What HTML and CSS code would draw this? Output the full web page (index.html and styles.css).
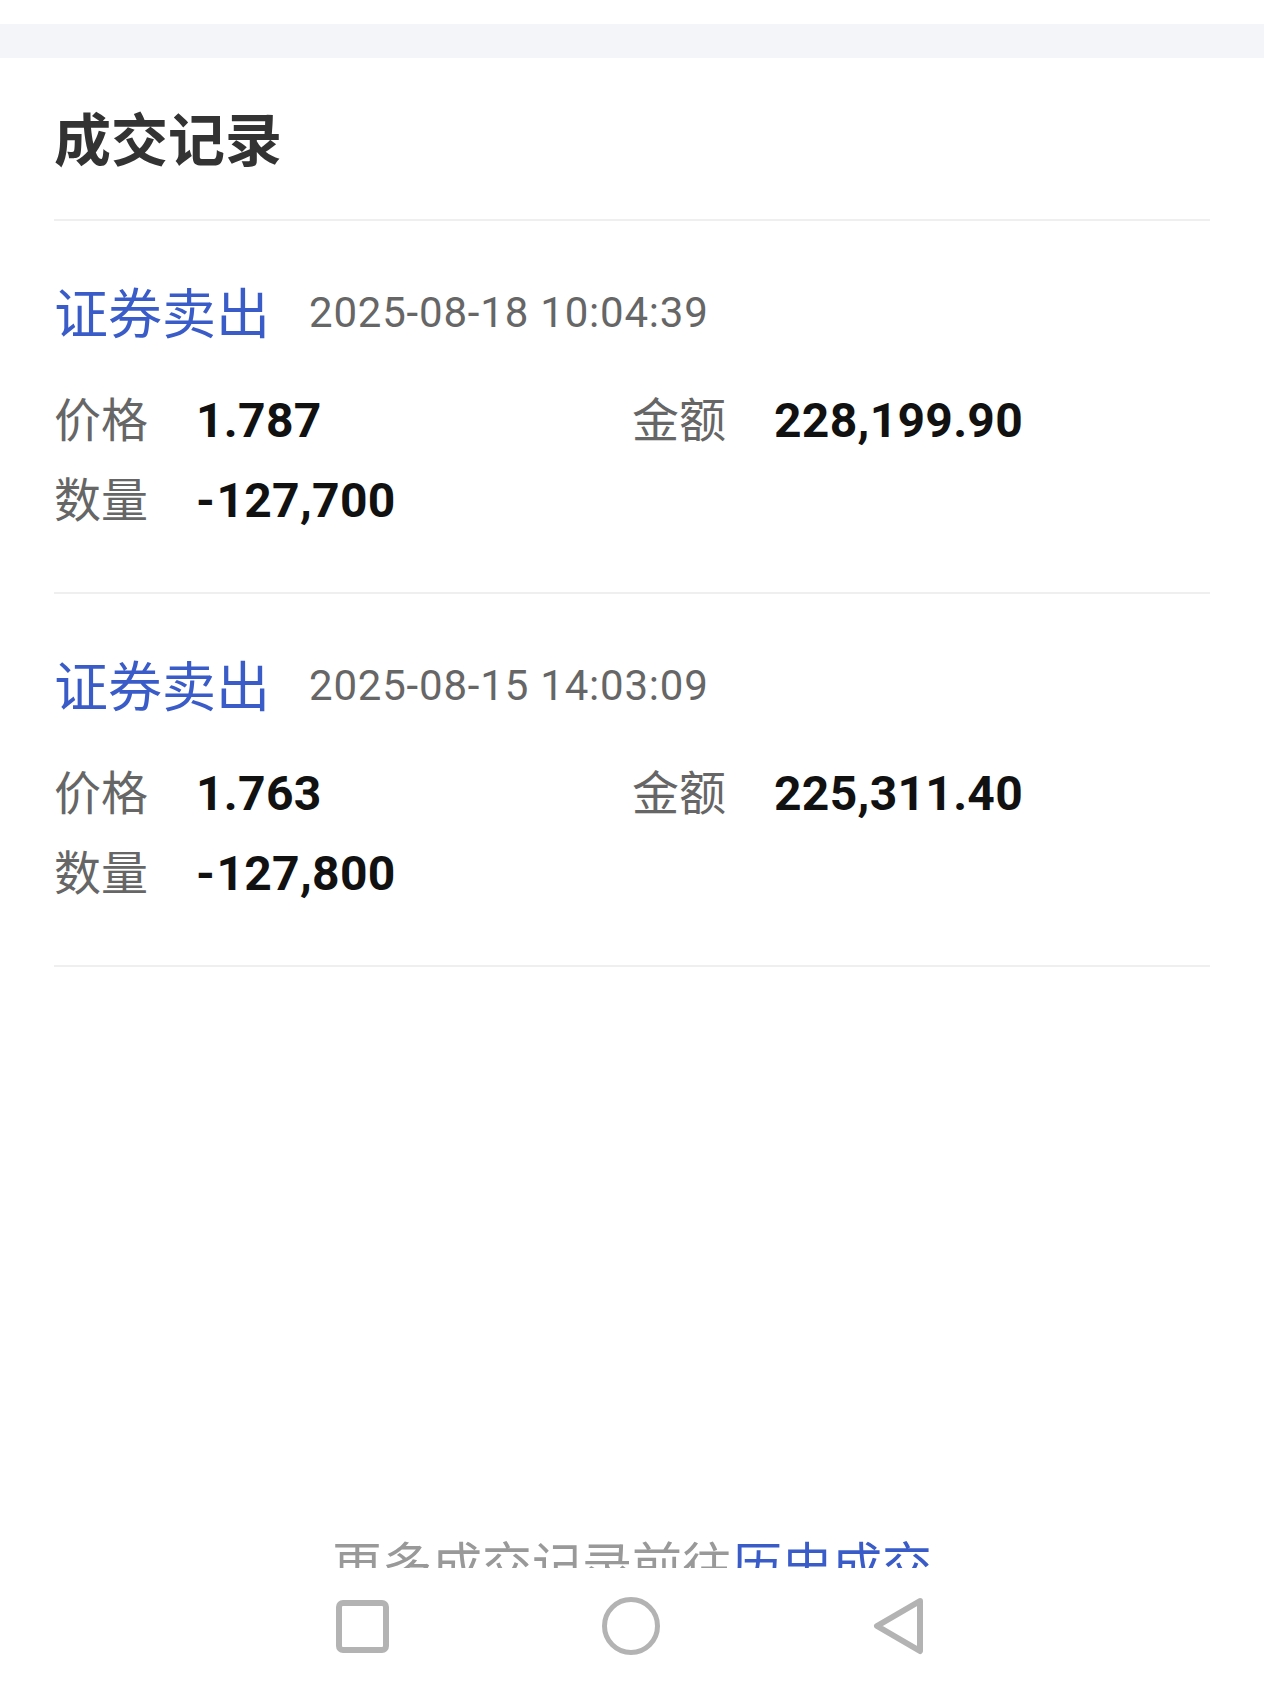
FILE: index.html
```html
<!DOCTYPE html>
<html lang="zh-CN">
<head>
<meta charset="utf-8">
<title>成交记录</title>
<link rel="stylesheet" href="styles.css">
</head>
<body>
<div class="screen">
  <div class="statusbar"></div>
  <div class="band"></div>
  <main class="content">
    <h1 class="title">成交记录</h1>
    <div class="records">
      <section class="record">
        <div class="record-head">
          <span class="type">证券卖出</span>
          <span class="time">2025-08-18 10:04:39</span>
        </div>
        <div class="fields">
          <div class="field"><span class="label">价格</span><span class="value">1.787</span></div>
          <div class="field"><span class="label">金额</span><span class="value">228,199.90</span></div>
          <div class="field"><span class="label">数量</span><span class="value"><span class="sign">-</span>127,700</span></div>
        </div>
      </section>
      <section class="record">
        <div class="record-head">
          <span class="type">证券卖出</span>
          <span class="time">2025-08-15 14:03:09</span>
        </div>
        <div class="fields">
          <div class="field"><span class="label">价格</span><span class="value">1.763</span></div>
          <div class="field"><span class="label">金额</span><span class="value">225,311.40</span></div>
          <div class="field"><span class="label">数量</span><span class="value"><span class="sign">-</span>127,800</span></div>
        </div>
      </section>
    </div>
    <p class="more">更多成交记录前往<span class="link">历史成交</span></p>
  </main>
  <nav class="navbar">
    <svg class="nav-icon nav-square" width="53" height="53" viewBox="0 0 53 53"><rect x="3" y="3" width="47" height="47" rx="4" ry="4" fill="none" stroke="#b3b3b3" stroke-width="6"/></svg>
    <svg class="nav-icon" width="58" height="58" viewBox="0 0 58 58"><circle cx="29" cy="29" r="26.5" fill="none" stroke="#b3b3b3" stroke-width="5"/></svg>
    <svg class="nav-icon" width="52" height="58" viewBox="0 0 52 58"><path d="M47 4 L4 29 L47 54 Z" fill="none" stroke="#b3b3b3" stroke-width="6" stroke-linejoin="round"/></svg>
  </nav>
</div>
</body>
</html>
```

FILE: styles.css
```css
* { box-sizing: border-box; }

html, body {
  margin: 0;
  padding: 0;
  background: #ffffff;
}

body {
  font-family: "Noto Sans CJK SC", "Noto Sans", sans-serif;
  color: #111111;
}

.screen {
  width: 1264px;
  height: 1695px;
  display: flex;
  flex-direction: column;
  overflow: hidden;
}

.statusbar {
  height: 24px;
  background: #ffffff;
  flex: none;
}

.band {
  height: 34px;
  background: #f4f5f9;
  flex: none;
}

.content {
  height: 1510px;
  flex: none;
  overflow: hidden;
  display: flex;
  flex-direction: column;
  padding: 0 54px;
}

.title {
  margin: 0 0 55px;
  padding-top: 50px;
  font-family: "Noto Sans CJK SC", sans-serif;
  font-size: 57px;
  line-height: 56px;
  font-weight: 700;
  color: #333333;
}

.records {
  border-bottom: 2px solid #efefef;
}

.record {
  border-top: 2px solid #efefef;
  padding: 64px 0 55px;
}

.record-head {
  display: flex;
  align-items: center;
  height: 52px;
}

.type {
  font-family: "Noto Sans CJK SC", sans-serif;
  font-size: 54px;
  line-height: 52px;
  color: #3a5cc8;
}

.time {
  margin-left: 39px;
  padding-top: 3px;
  font-family: Roboto, "Noto Sans", sans-serif;
  font-size: 42px;
  line-height: 42px;
  letter-spacing: 0.8px;
  color: #666666;
}

.fields {
  margin-top: 40px;
  display: grid;
  grid-template-columns: 578px 1fr;
  grid-auto-rows: 80px;
}

.field {
  display: flex;
  align-items: baseline;
  line-height: 80px;
}

.label {
  width: 142px;
  flex: none;
  font-family: "Noto Sans CJK SC", sans-serif;
  font-size: 47px;
  color: #666666;
}

.value {
  font-family: Roboto, "Noto Sans", sans-serif;
  font-size: 48px;
  font-weight: 700;
  letter-spacing: 0.3px;
  color: #111111;
}

.sign {
  letter-spacing: 1.5px;
}

.more {
  margin: auto 0 -19px;
  font-family: "Noto Sans CJK SC", sans-serif;
  font-size: 50px;
  line-height: 49px;
  text-align: center;
  color: #999999;
}

.link {
  color: #3a5cc8;
}

.navbar {
  flex: 1;
  background: #ffffff;
  display: flex;
  justify-content: center;
  align-items: flex-start;
  gap: 213px;
  padding: 29px 4px 0 0;
}

.nav-icon {
  display: block;
  flex: none;
}

.nav-square {
  margin-top: 3px;
}
```
